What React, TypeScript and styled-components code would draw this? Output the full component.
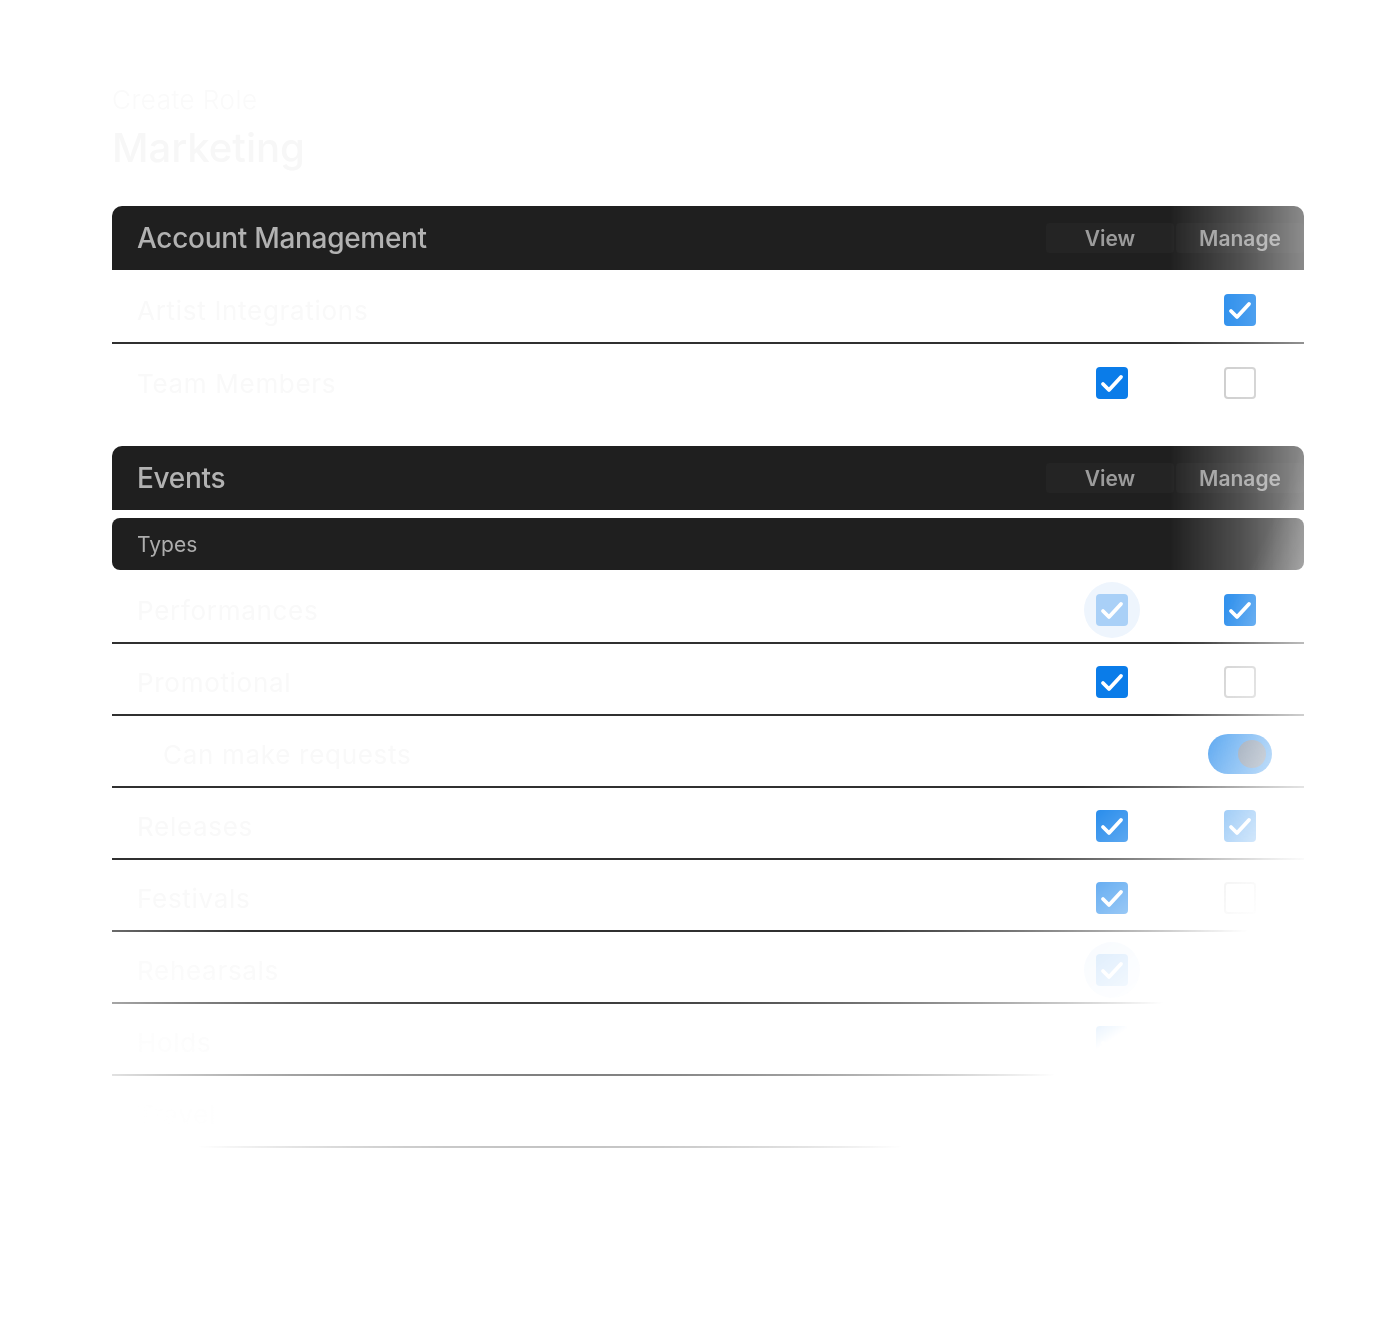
import styled, { createGlobalStyle } from 'styled-components';

const GlobalStyle = createGlobalStyle`
  html, body {
    margin: 0;
    background: #ffffff;
  }
  body {
    font-family: Inter, 'Noto Sans', sans-serif;
    -webkit-font-smoothing: antialiased;
  }
`;

const Page = styled.div`
  width: 1390px;
  min-height: 1323px;
  padding: 84px 0 0 112px;
  box-sizing: border-box;
`;

/* bottom fade: the whole sheet dissolves into white */
const Fade = styled.div`
  width: 1192px;
  -webkit-mask-image: radial-gradient(circle 1010px at 438px 116px, #000 790px, transparent 1010px);
  mask-image: radial-gradient(circle 1010px at 438px 116px, #000 790px, transparent 1010px);
`;

/* right edge fade */
const FadeRight = styled.div`
  -webkit-mask-image: linear-gradient(to right, #000 1058px, rgba(0, 0, 0, 0.78) 1130px, rgba(0, 0, 0, 0.52) 1192px);
  mask-image: linear-gradient(to right, #000 1058px, rgba(0, 0, 0, 0.78) 1130px, rgba(0, 0, 0, 0.52) 1192px);
`;

const Eyebrow = styled.div`
  font-size: 26px;
  line-height: 32px;
  font-weight: 300;
  letter-spacing: 0.5px;
  color: #fafafa;
`;

const Title = styled.h1`
  margin: 8px 0 34px;
  font-size: 40px;
  line-height: 48px;
  font-weight: 500;
  color: #f7f7f7;
`;

const Group = styled.section`
  & + & {
    margin-top: 30px;
  }
`;

const GroupHeader = styled.div`
  height: 64px;
  display: flex;
  align-items: center;
  justify-content: space-between;
  padding-left: 25px;
  background: #1f1f1f;
  border-radius: 10px 10px 0 0;
`;

const GroupTitle = styled.h2`
  margin: 0;
  font-size: 28px;
  font-weight: 500;
  letter-spacing: -0.3px;
  color: #b2b2b2;
`;

const HeadCols = styled.div`
  display: flex;
  gap: 2px;
`;

const ColLabel = styled.div`
  width: 128px;
  height: 30px;
  display: flex;
  align-items: center;
  justify-content: center;
  background: #242424;
  border-radius: 3px;
  font-size: 21px;
  font-weight: 600;
  color: #9b9b9b;
`;

const SubHeader = styled.div`
  margin-top: 8px;
  height: 52px;
  display: flex;
  align-items: center;
  padding-left: 25px;
  background: #1f1f1f;
  border-radius: 8px;
  font-size: 21px;
  color: #adadad;
`;

const Rows = styled.div`
  margin-top: 2px;
`;

const Row = styled.div<{ $line?: boolean; $indent?: boolean }>`
  height: 72px;
  box-sizing: border-box;
  display: flex;
  align-items: center;
  padding: 6px 0 0 ${(p) => (p.$indent ? 51 : 25)}px;
  border-bottom: ${(p) => (p.$line ? '2px solid #303030' : '0')};
`;

const Label = styled.div`
  flex: 1;
  font-size: 26px;
  letter-spacing: 0.7px;
  color: #f9f9f9;
`;

const Cols = styled.div`
  display: flex;
`;

const Cell = styled.div`
  width: 128px;
  display: flex;
  justify-content: center;
`;

type BoxState = 'on' | 'off' | 'soft';

const Box = styled.div<{ $state: BoxState }>`
  position: relative;
  width: 32px;
  height: 32px;
  box-sizing: border-box;
  border-radius: 4px;
  display: flex;
  align-items: center;
  justify-content: center;
  background: ${(p) =>
    p.$state === 'on' ? '#0a7ce9' : p.$state === 'soft' ? '#a9d0f7' : '#ffffff'};
  border: ${(p) => (p.$state === 'off' ? '2px solid #c6c6c6' : '0')};

  &::before {
    content: '';
    display: ${(p) => (p.$state === 'soft' ? 'block' : 'none')};
    position: absolute;
    left: -12px;
    top: -12px;
    width: 56px;
    height: 56px;
    border-radius: 50%;
    background: #eef5fd;
    z-index: -1;
  }

  svg {
    display: ${(p) => (p.$state === 'off' ? 'none' : 'block')};
  }
`;

const Toggle = styled.div`
  width: 64px;
  height: 40px;
  border-radius: 20px;
  background: #0a7ce9;
  display: flex;
  align-items: center;
  justify-content: flex-end;
  padding-right: 6px;
  box-sizing: border-box;
`;

const Thumb = styled.div`
  width: 28px;
  height: 28px;
  border-radius: 50%;
  background: #4f6683;
`;

function Check({ state }: { state: BoxState }) {
  return (
    <Box $state={state}>
      <svg width="32" height="32" viewBox="0 0 32 32" fill="none">
        <path d="M7 17l6 6L25 10" stroke="#ffffff" strokeWidth="3.8" strokeLinecap="round" strokeLinejoin="round" />
      </svg>
    </Box>
  );
}

type Value = BoxState | 'toggle' | null;

interface Perm {
  label: string;
  view: Value;
  manage: Value;
  indent?: boolean;
}

const account: Perm[] = [
  { label: 'Artist Integrations', view: null, manage: 'on' },
  { label: 'Team Members', view: 'on', manage: 'off' },
];

const events: Perm[] = [
  { label: 'Performances', view: 'soft', manage: 'on' },
  { label: 'Promotional', view: 'on', manage: 'off' },
  { label: 'Can make requests', view: null, manage: 'toggle', indent: true },
  { label: 'Releases', view: 'on', manage: 'on' },
  { label: 'Festivals', view: 'on', manage: 'off' },
  { label: 'Rehearsals', view: 'soft', manage: 'off' },
  { label: 'Holds', view: 'on', manage: 'off' },
  { label: 'Travel', view: 'on', manage: 'off' },
];

function Control({ value }: { value: Value }) {
  if (!value) return <Cell />;
  if (value === 'toggle')
    return (
      <Cell>
        <Toggle>
          <Thumb />
        </Toggle>
      </Cell>
    );
  return (
    <Cell>
      <Check state={value} />
    </Cell>
  );
}

function PermRow({ perm, line }: { perm: Perm; line: boolean }) {
  return (
    <Row $line={line} $indent={perm.indent}>
      <Label>{perm.label}</Label>
      <Cols>
        <Control value={perm.view} />
        <Control value={perm.manage} />
      </Cols>
    </Row>
  );
}

function Header({ title }: { title: string }) {
  return (
    <GroupHeader>
      <GroupTitle>{title}</GroupTitle>
      <HeadCols>
        <ColLabel>View</ColLabel>
        <ColLabel>Manage</ColLabel>
      </HeadCols>
    </GroupHeader>
  );
}

export default function App() {
  return (
    <Page>
      <GlobalStyle />
      <Fade>
        <FadeRight>
          <Eyebrow>Create Role</Eyebrow>
          <Title>Marketing</Title>

          <Group>
            <Header title="Account Management" />
            <Rows>
              {account.map((p, i) => (
                <PermRow key={p.label} perm={p} line={i < account.length - 1} />
              ))}
            </Rows>
          </Group>

          <Group>
            <Header title="Events" />
            <SubHeader>Types</SubHeader>
            <Rows>
              {events.map((p) => (
                <PermRow key={p.label} perm={p} line />
              ))}
            </Rows>
          </Group>
        </FadeRight>
      </Fade>
    </Page>
  );
}
